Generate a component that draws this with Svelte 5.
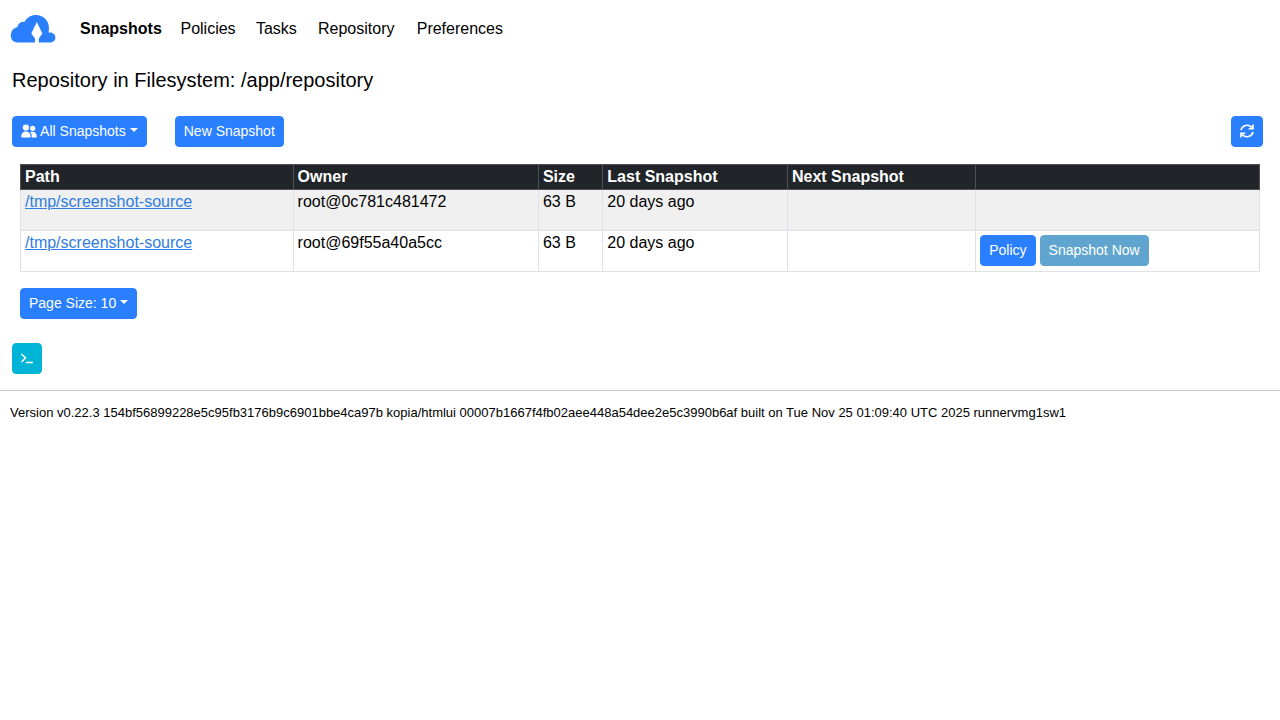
<script lang="ts">
  type Source = {
    path: string;
    owner: string;
    size: string;
    last: string;
    next: string;
    local: boolean;
  };

  const nav = ['Snapshots', 'Policies', 'Tasks', 'Repository', 'Preferences'];

  const sources: Source[] = [
    { path: '/tmp/screenshot-source', owner: 'root@0c781c481472', size: '63 B', last: '20 days ago', next: '', local: false },
    { path: '/tmp/screenshot-source', owner: 'root@69f55a40a5cc', size: '63 B', last: '20 days ago', next: '', local: true },
  ];

  let active = $state('Snapshots');
</script>

<header class="navbar">
  <a class="brand" href="#home" aria-label="Home">
    <svg width="46" height="30" viewBox="0 0 46 30">
      <path
        fill="#2a7fff"
        d="M7.500 28.500C3.500 28.500 .8 25.500 .8 21.500C.8 17 3.500 13.700 7.200 13.200C8.200 9.300 11 7.500 14.500 7.800C17 3.500 21 1 26 1C33 1 38.500 6 38.900 13C39 15 38.900 17 38.600 18.500C42.500 18.200 45.400 20.300 45.400 23.500C45.400 26.700 42.800 28.500 39.500 28.500Z"
      />
      <path fill="#fff" d="M26.800 8L32.400 19.500L28.800 24.500V29H25V24.500L21.300 19.500Z" />
    </svg>
  </a>
  <nav>
    {#each nav as item}
      <a
        class="nav-link"
        class:active={active === item}
        href="#{item.toLowerCase()}"
        data-label={item}
        onclick={() => (active = item)}>{item}</a>
    {/each}
  </nav>
</header>

<main>
  <h5>Repository in Filesystem: /app/repository</h5>

  <div class="toolbar">
    <button class="btn">
      <svg class="users" width="16" height="14" viewBox="0 0 16 14" fill="currentColor" aria-hidden="true">
        <circle cx="4.900" cy="3.500" r="3.100" />
        <path d="M.2 12.200C.2 9.500 2.200 7.600 4.900 7.600S9.600 9.500 9.600 12.200C9.600 13.100 9.200 13.500 8.400 13.500H1.400C.6 13.500 .2 13.100 .2 12.200Z" />
        <circle cx="11.700" cy="4.300" r="2.600" />
        <path d="M9.400 8.300C12.800 6.900 15.800 9.100 15.800 12.400C15.800 13.200 15.500 13.500 14.800 13.500H10.500C11 12.400 11 10.100 9.400 8.300Z" />
      </svg>
      All Snapshots<span class="caret"></span>
    </button>
    <button class="btn">New Snapshot</button>
    <button class="btn refresh" aria-label="Refresh">
      <svg width="14" height="14" viewBox="0 0 14 14" aria-hidden="true">
        <g fill="none" stroke="currentColor" stroke-width="1.700">
          <path d="M1 6.200A6.100 6.100 0 0 1 11.600 3.400" />
          <path d="M13 7.800A6.100 6.100 0 0 1 2.400 10.600" />
        </g>
        <g fill="currentColor">
          <path d="M13.800 .4V5.600H8.600V4.200L11.200 4L12.200 2V.4Z" />
          <path d="M.2 13.600V8.400H5.400V9.800L2.800 10L1.800 12V13.600Z" />
        </g>
      </svg>
    </button>
  </div>

  <div class="sources">
    <table>
      <colgroup>
        <col style="width: 22%" />
        <col style="width: 19.8%" />
        <col style="width: 5.2%" />
        <col style="width: 14.9%" />
        <col style="width: 15.2%" />
        <col />
      </colgroup>
      <thead>
        <tr>
          <th>Path</th>
          <th>Owner</th>
          <th>Size</th>
          <th>Last Snapshot</th>
          <th>Next Snapshot</th>
          <th></th>
        </tr>
      </thead>
      <tbody>
        {#each sources as source}
          <tr>
            <td><a href="#source">{source.path}</a></td>
            <td>{source.owner}</td>
            <td>{source.size}</td>
            <td>{source.last}</td>
            <td>{source.next}</td>
            <td>
              {#if source.local}
                <div class="actions">
                  <button class="btn">Policy</button>
                  <button class="btn success">Snapshot Now</button>
                </div>
              {/if}
            </td>
          </tr>
        {/each}
      </tbody>
    </table>
    <button class="btn">Page Size: 10<span class="caret"></span></button>
  </div>

  <button class="btn terminal" aria-label="Show CLI command">
    <svg width="14" height="14" viewBox="0 0 14 14" fill="none" stroke="currentColor" aria-hidden="true">
      <path stroke-width="1.500" d="M1.500 2L5.500 6L1.500 10" />
      <path stroke-width="1.500" d="M6 10.500H13" />
    </svg>
  </button>
</main>

<footer>
  Version v0.22.3 154bf56899228e5c95fb3176b9c6901bbe4ca97b kopia/htmlui 00007b1667f4fb02aee448a54dee2e5c3990b6af built on Tue Nov 25 01:09:40 UTC 2025 runnervmg1sw1
</footer>

<style>
  :global(body) {
    margin: 0;
    background: #fff;
    color: #000;
    font-family: 'Liberation Sans', Arial, sans-serif;
    font-size: 16px;
    line-height: 24px;
  }
  .navbar {
    display: flex;
    align-items: center;
    padding: 9px 10px 8px;
  }
  .brand {
    display: flex;
    margin-right: 16px;
  }
  .brand svg {
    display: block;
  }
  nav {
    display: flex;
  }
  .nav-link {
    display: flex;
    flex-direction: column;
    align-items: center;
    padding: 8px;
    color: #000;
    text-decoration: none;
  }
  /* reserves the bold width so links don't shift when activated */
  .nav-link::after {
    content: attr(data-label);
    height: 0;
    overflow: hidden;
    visibility: hidden;
    font-weight: bold;
  }
  .nav-link.active {
    font-weight: bold;
  }
  main {
    padding: 11px 12px 16px;
  }
  h5 {
    margin: 0 0 24px;
    font-size: 20px;
    font-weight: 400;
    line-height: 24px;
  }
  .toolbar {
    display: flex;
    gap: 28px;
    padding-right: 5px;
  }
  .btn {
    padding: 4px 8px;
    border: 1px solid #2a7fff;
    border-radius: 4px;
    background: #2a7fff;
    color: #fff;
    font-family: inherit;
    font-size: 14px;
    line-height: 21px;
    white-space: nowrap;
    cursor: pointer;
  }
  .btn.success {
    border-color: #5fa5cf;
    background: #5fa5cf;
  }
  .btn.terminal {
    display: flex;
    align-items: center;
    height: 31px;
    padding: 0 7px;
    border-color: #00b4d8;
    background: #00b4d8;
  }
  .users,
  .refresh svg {
    vertical-align: -2px;
  }
  .refresh {
    margin-left: auto;
  }
  .caret {
    display: inline-block;
    margin-left: 4px;
    border-top: 4px solid;
    border-right: 4px solid transparent;
    border-left: 4px solid transparent;
    vertical-align: 4px;
  }
  .sources {
    padding: 17px 8px 24px;
  }
  table {
    width: 100%;
    margin-bottom: 16px;
    border-collapse: collapse;
    table-layout: fixed;
  }
  th,
  td {
    padding: 0 4px;
    border: 1px solid #dee2e6;
    text-align: left;
    vertical-align: top;
  }
  th {
    border-color: #4d5154;
    background: #212529;
    color: #fff;
  }
  td {
    height: 40px;
  }
  tbody tr:nth-child(odd) {
    background: #f0f0f0;
  }
  td a {
    color: #2f7de1;
  }
  .actions {
    display: flex;
    gap: 4px;
    padding-top: 4px;
  }
  footer {
    padding: 10px;
    border-top: 1px solid #c8c8c8;
    font-size: 13px;
  }
</style>
